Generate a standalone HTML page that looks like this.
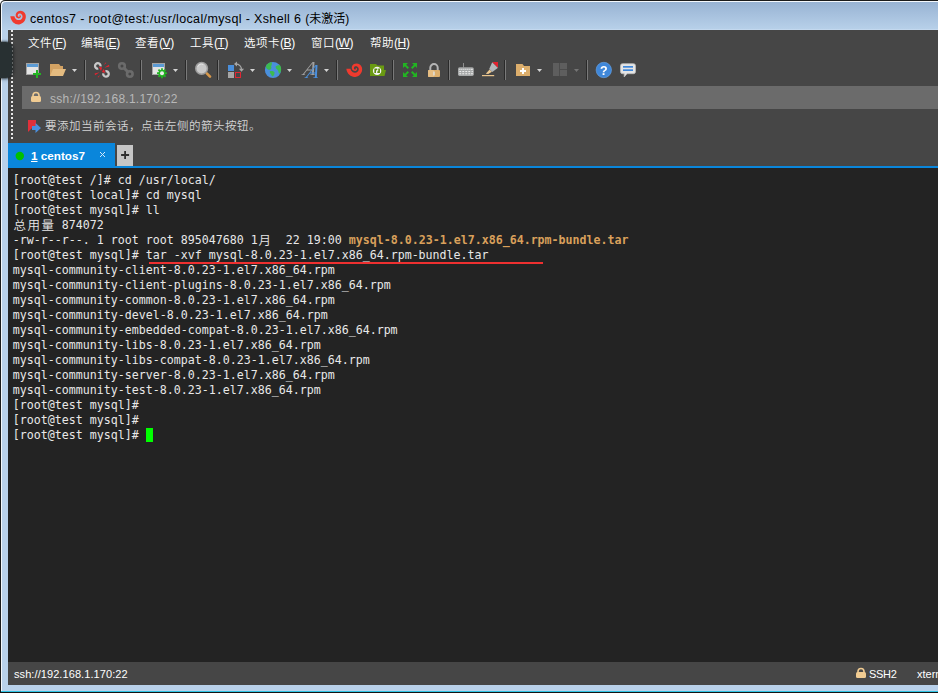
<!DOCTYPE html>
<html lang="zh-CN">
<head>
<meta charset="utf-8">
<title>centos7 - root@test:/usr/local/mysql - Xshell 6</title>
<style>
html,body{margin:0;padding:0;}
body{width:938px;height:693px;overflow:hidden;position:relative;background:#fff;
  font-family:"Liberation Sans","Noto Sans CJK SC",sans-serif;}
.abs{position:absolute;}
#frame{left:0;top:0;width:960px;height:693px;box-sizing:border-box;border:1px solid #1b1b1b;border-bottom-color:#141414;border-radius:5px 0 0 0;box-shadow:inset 1px 1px 0 #f4f8fc;background:linear-gradient(#97b2d2 0px,#98b3d3 1px,#b7d0e9 28px,#b9d1ea 29px);}
#hl{left:8px;top:29px;width:930px;height:1px;background:#c3d8ee;}
#topline,#topwhite,#leftline,#leftwhite{display:none;}
#botline{left:0;top:692px;width:938px;height:1px;background:#141414;}
#botcyan{left:1px;top:691px;width:937px;height:1px;background:#2fc4e4;}
#title{left:30px;top:10px;font-size:12.5px;line-height:18px;color:#000;white-space:nowrap;letter-spacing:0.36px;}
#title span{font-size:12px;letter-spacing:0;}
#app{left:8px;top:30px;width:930px;height:655px;background:#464646;}
#menubar{left:0;top:0;width:930px;height:26px;}
.menu{position:absolute;top:5px;font-size:12px;line-height:16px;color:#fff;white-space:nowrap;letter-spacing:-0.400px;}
.menu i{font-style:normal;font-size:11.500px;letter-spacing:0.500px;font-weight:350;}
#grip,#grip2{left:3px;width:2px;background:repeating-linear-gradient(#e8e8e8 0,#e8e8e8 2px,transparent 2px,transparent 4px);}
#grip{top:0;height:42px;}
#grip2{top:43px;height:66px;}
#addr{left:14px;top:56px;width:916px;height:23px;background:#6b6b6b;}
#addr span{position:absolute;left:28px;top:5px;font-size:12px;line-height:16px;color:#b8b8b8;letter-spacing:0.25px;}
#hint{left:37px;top:88px;font-size:11.500px;letter-spacing:0.500px;line-height:16px;color:#d4d4d4;white-space:nowrap;font-weight:350;}
#tab{left:0;top:113px;width:107px;height:25px;background:#0a86db;}
#tabline{left:0;top:136px;width:930px;height:2px;background:#0a86db;}
#tabtxt{left:23px;top:118px;font-size:11.7px;line-height:16px;font-weight:bold;color:#fff;white-space:nowrap;}
#plus{left:109px;top:115px;width:16px;height:21px;background:#c6c6c6;}
#term{left:0;top:138px;width:930px;height:494px;background:#232323;}
#term pre{margin:0;position:absolute;left:4.700px;top:5px;font-family:"DejaVu Sans Mono","Noto Sans CJK SC",monospace;font-size:11.63px;line-height:15px;color:#e8e8e8;}
#cursor{left:138px;top:260px;width:7px;height:14px;background:#00ff00;}
#redline{left:141px;top:94px;width:394px;height:2px;background:#ee3030;}
#status{left:0;top:632px;width:930px;height:23px;background:#464646;}
#status span{position:absolute;top:4px;font-size:11px;line-height:16px;color:#fff;white-space:nowrap;letter-spacing:0.08px;}
.b{color:#d9a05b;font-weight:bold;}
#term s{text-decoration:none;position:relative;top:-1px;}
.c{display:inline-block;width:14px;text-align:center;font-size:12.5px;line-height:15px;vertical-align:top;font-weight:350;}
#blob{left:-6px;top:42px;width:17.500px;height:36px;border-radius:6.500px;background:#283032;box-shadow:0.500px 0 2px 0.800px rgba(30,36,38,.7),1px 1px 4px rgba(0,0,0,.35);}
#ico{left:0;top:0;will-change:transform;}
</style>
</head>
<body>
<div id="frame" class="abs"></div>
<div id="hl" class="abs"></div><div id="topline" class="abs"></div><div id="topwhite" class="abs"></div>
<div id="leftline" class="abs"></div><div id="leftwhite" class="abs"></div>
<div id="botcyan" class="abs"></div><div id="botline" class="abs"></div>
<div id="title" class="abs">centos7 - root@test:/usr/local/mysql - Xshell 6 <span>(未激活)</span></div>
<div id="app" class="abs">
  <div id="menubar" class="abs">
    <span class="menu" style="left:20px"><i>文件</i>(<u>F</u>)</span>
    <span class="menu" style="left:73px"><i>编辑</i>(<u>E</u>)</span>
    <span class="menu" style="left:127px"><i>查看</i>(<u>V</u>)</span>
    <span class="menu" style="left:182px"><i>工具</i>(<u>T</u>)</span>
    <span class="menu" style="left:236px"><i>选项卡</i>(<u>B</u>)</span>
    <span class="menu" style="left:303px"><i>窗口</i>(<u>W</u>)</span>
    <span class="menu" style="left:362px"><i>帮助</i>(<u>H</u>)</span>
  </div>
  <div id="grip" class="abs"></div><div id="grip2" class="abs"></div>
  <div id="addr" class="abs"><span>ssh://192.168.1.170:22</span></div>
  <div id="hint" class="abs">要添加当前会话，点击左侧的箭头按钮。</div>
  <div id="tab" class="abs"></div>
  <div id="tabline" class="abs"></div>
  <div id="tabtxt" class="abs"><u>1</u> centos7</div>
  <div id="plus" class="abs"></div>
  <div id="term" class="abs"><pre><s>[</s>root@test /<s>]</s># cd /usr/local/
<s>[</s>root@test local<s>]</s># cd mysql
<s>[</s>root@test mysql<s>]</s># ll
<span class="c">总</span><span class="c">用</span><span class="c">量</span> 874072
-rw-r--r--. 1 root root 895047680 1<span class="c">月</span>  22 19:00 <span class="b">mysql-8.0.23-1.el7.x86_64.rpm-bundle.tar</span>
<s>[</s>root@test mysql<s>]</s># tar -xvf mysql-8.0.23-1.el7.x86_64.rpm-bundle.tar
mysql-community-client-8.0.23-1.el7.x86_64.rpm
mysql-community-client-plugins-8.0.23-1.el7.x86_64.rpm
mysql-community-common-8.0.23-1.el7.x86_64.rpm
mysql-community-devel-8.0.23-1.el7.x86_64.rpm
mysql-community-embedded-compat-8.0.23-1.el7.x86_64.rpm
mysql-community-libs-8.0.23-1.el7.x86_64.rpm
mysql-community-libs-compat-8.0.23-1.el7.x86_64.rpm
mysql-community-server-8.0.23-1.el7.x86_64.rpm
mysql-community-test-8.0.23-1.el7.x86_64.rpm
<s>[</s>root@test mysql<s>]</s>#
<s>[</s>root@test mysql<s>]</s>#
<s>[</s>root@test mysql<s>]</s># </pre>
    <div id="redline" class="abs"></div>
    <div id="cursor" class="abs"></div>
  </div>
  <div id="status" class="abs"><span style="left:6px">ssh://192.168.1.170:22</span><span style="left:861px;letter-spacing:-0.3px">SSH2</span><span style="left:909px;letter-spacing:0">xterm</span></div>
</div>
<div id="blob" class="abs"></div>
<svg id="ico" class="abs" width="938" height="693" viewBox="0 0 938 693">
<defs>
  <path id="dd" d="M0 0h5l-2.5 3z"/>
  <g id="sep"><rect x="0" y="60" width="1" height="20" fill="#2a2a2a"/><rect x="1" y="60" width="1" height="20" fill="#7a7a7a"/></g>
</defs>
<!-- title-bar Xshell logo -->
<g transform="translate(10,10)">
  <path d="M0.3 6.2 C1.2 12.5 6 15.2 10 14.2 C14.5 13 16.6 8.6 15.6 4.8 C14.6 1.2 10.6 -0.2 7.8 1.4 C5.2 2.9 5 6.6 7.2 8 C8.8 9 10.8 8.2 10.9 6.6 C10.95 5.6 10 5 9.3 5.4 C9.9 5.7 9.9 6.6 9.2 6.8 C8.2 7 7.5 6 7.8 5 C8.2 3.7 9.9 3.2 11.2 4 C12.8 5 13 7.4 11.6 8.9 C9.8 10.8 6.6 10.4 5.2 8.2 C4.6 7.3 4.5 6.6 4.5 6.2 Z" fill="#f03a2e"/>
</g>
<!-- separators -->
<use href="#sep" x="84"/><use href="#sep" x="140"/><use href="#sep" x="185"/><use href="#sep" x="217"/>
<use href="#sep" x="336"/><use href="#sep" x="392"/><use href="#sep" x="448"/><use href="#sep" x="504"/><use href="#sep" x="586"/>
<!-- dropdown arrows -->
<g fill="#d4d4d4">
<use href="#dd" x="72" y="69"/><use href="#dd" x="173" y="69"/><use href="#dd" x="250" y="69"/><use href="#dd" x="287" y="69"/>
<use href="#dd" x="324" y="69"/><use href="#dd" x="537" y="69"/>
</g>
<use href="#dd" x="574" y="69" fill="#747474"/>
<!-- 1 new session -->
<rect x="26.5" y="63.5" width="12" height="11" fill="#e4e4e4" stroke="#a4a4a4"/>
<rect x="27" y="64" width="11" height="3" fill="#5b9bd5"/>
<path d="M36 70h2v3h3v2h-3v3h-2v-3h-3v-2h3z" fill="#22b422"/>
<!-- 2 open folder -->
<path d="M50 64h9l1.5 2H63v10H50z" fill="#d3a263"/>
<path d="M53 69h13l-3 7H50z" fill="#e4bb80"/>
<!-- 3 disconnect -->
<g fill="none" stroke="#c8c8c8" stroke-width="2.300">
<path d="M98.28 68.61A2.75 2.75 0 1 1 100.51 66.38"/>
<path d="M105.52 71.19A2.75 2.75 0 1 1 103.29 73.42"/>
</g>
<g fill="#e3222f">
<path d="M98.700 66.800l3.500 0.700-1.200 3.500z"/><path d="M105.300 73l-3.500-1 2-3.200z"/>
<path d="M103.800 65l1.800-2.600 0.800 0.700z"/><path d="M104.300 67.700l4.600-2.900 0.500 1.700z"/>
<path d="M100.200 75l-1.800 2.600-0.800-0.700z"/><path d="M99.700 72.300l-4.600 2.900-0.500-1.700z"/>
</g>
<!-- 4 link (disabled) -->
<g fill="none" stroke="#6b6b6b" stroke-width="2.600">
<circle cx="122" cy="66" r="2.800"/><circle cx="129.800" cy="74" r="2.800"/>
<path d="M123.800 67.800l4.400 4.400" stroke-width="3"/>
</g>
<!-- 5 session properties -->
<rect x="152.500" y="63.500" width="12" height="11" fill="#e4e4e4" stroke="#a4a4a4"/>
<rect x="153" y="64" width="11" height="3" fill="#5b9bd5"/>
<g transform="translate(162,73.2)">
<g stroke="#22b422" stroke-width="1.800" stroke-linecap="butt">
<path d="M0-5V5M-5 0H5M-3.550-3.550L3.550 3.550M-3.550 3.550L3.550-3.550"/>
</g>
<circle r="3.500" fill="#22b422"/><circle r="2" fill="#ececec"/>
</g>
<!-- 6 magnifier -->
<path d="M206.800 73.400l3.200 3.200" stroke="#d7984a" stroke-width="2.700" stroke-linecap="round"/>
<circle cx="201.600" cy="68.400" r="5.850" fill="#c9c9c9" stroke="#9c9c9c" stroke-width="1.500"/>
<path d="M197.800 66.700A4.300 4.300 0 0 1 203.300 64.500" fill="none" stroke="#e6e6e6" stroke-width="1"/>
<!-- 7 layout arrows -->
<rect x="228" y="65" width="6" height="6" fill="#4a8fdc"/>
<rect x="228" y="72" width="6" height="6" fill="#a6a6a6"/>
<rect x="235.500" y="72.500" width="5" height="5" fill="none" stroke="#e02634"/>
<path d="M236 64A5.500 5.500 0 0 1 241.500 69.500" fill="none" stroke="#a6a6a6" stroke-width="1.300"/>
<path d="M234 64l3-2.600v5.200z" fill="#a6a6a6"/><path d="M241.500 71.800l-2.600-3h5.200z" fill="#a6a6a6"/>
<!-- 8 globe -->
<circle cx="273" cy="70" r="8.100" fill="#4a8fdc"/>
<path d="M267 64.600c1.400-1.500 3.200-2.300 4.800-2.300c.4 1.600-.2 3-.7 4.200c.7 1.200.4 2.500-.9 3.200c-1.600.3-3.200-.5-4-1.800c-.4-1.100 0-2.300.8-3.300z" fill="#3dbb4f"/>
<path d="M275.500 66.800c1.200-1.100 2.800-1.900 4.400-1.700c1 1.500 1.500 3.400 1.200 5.300c-.4 1.500-1.100 2.700-2 3.500c-.6-1.500-.9-3-1.700-4.300c-1-.6-1.700-1.600-1.900-2.800z" fill="#3dbb4f"/>
<path d="M269.800 71.300c1.700-.7 3.700-.3 4.700 1c.2 1.700-.6 3.300-1.900 4.300c-.7-.4-1.200-1.200-1.400-2.100c-.9-.8-1.500-2-1.400-3.200z" fill="#3dbb4f"/>
<!-- 9 font -->
<g font-family="Liberation Serif, serif" font-style="italic" font-size="19.800">
<text transform="translate(302.600,75) skewX(-14) scale(1.020,1)" fill="#a0a0a0">A</text>
<text transform="translate(305.600,78) skewX(-14) scale(1.020,1)" fill="#4a8fdc">A</text>
</g>
<!-- 10 xshell logo -->
<g transform="translate(346,62.700) scale(1.020,0.990)">
  <path d="M0.3 6.2 C1.2 12.5 6 15.2 10 14.2 C14.5 13 16.6 8.6 15.6 4.8 C14.6 1.2 10.6 -0.2 7.8 1.4 C5.2 2.9 5 6.600 7.200 8 C8.800 9 10.800 8.200 10.900 6.600 C10.950 5.600 10 5 9.300 5.400 C9.900 5.700 9.900 6.600 9.200 6.800 C8.200 7 7.500 6 7.800 5 C8.200 3.700 9.900 3.200 11.200 4 C12.800 5 13 7.400 11.600 8.900 C9.800 10.800 6.600 10.400 5.200 8.200 C4.600 7.300 4.500 6.600 4.500 6.200 Z" fill="#f03a2e"/>
</g>
<!-- 11 xftp -->
<path d="M370 64h6l1.500 1.500H384v4.500h2l-1.500 6H370z" fill="#6a9a12"/>
<circle cx="377.100" cy="70.900" r="4.200" fill="#f6f6f6"/>
<path d="M375.200 73v-3.700h2.100M379.100 68.400v3.800h-1.800" fill="none" stroke="#5e8c0c" stroke-width="1.700"/>
<!-- 12 fullscreen -->
<g fill="#22b422">
<path d="M403 63h5l-1.800 1.800 2.800 2.800-1.400 1.400-2.800-2.800L403 68z"/>
<path d="M417 63v5l-1.800-1.800-2.800 2.800-1.400-1.400 2.800-2.800L412 63z"/>
<path d="M403 77v-5l1.800 1.800 2.800-2.800 1.400 1.400-2.800 2.800L408 77z"/>
<path d="M417 77h-5l1.800-1.800-2.800-2.800 1.400-1.400 2.800 2.800L417 72z"/>
</g>
<!-- 13 lock -->
<path d="M430.300 70.500v-2.700a3.700 3.700 0 0 1 7.400 0v2.700" fill="none" stroke="#b4b4b4" stroke-width="2"/>
<rect x="428" y="70" width="12" height="7" rx="1" fill="#dcae6c"/>
<rect x="428" y="70" width="6" height="7" rx="1" fill="#e6bd82"/>
<rect x="433.400" y="71.500" width="1.200" height="4" fill="#dfe9f5"/>
<!-- 14 keyboard -->
<rect x="463" y="63" width="1" height="4.500" fill="#8e8e8e"/>
<rect x="458" y="67.200" width="15.800" height="8.700" rx="1.600" fill="#a6a8a8"/>
<g fill="#ececec"><rect x="459.3" y="68.800" width="1.100" height="1.100"/><rect x="461.3" y="68.800" width="1.100" height="1.100"/><rect x="463.3" y="68.800" width="1.100" height="1.100"/><rect x="465.3" y="68.800" width="1.100" height="1.100"/><rect x="467.3" y="68.800" width="1.100" height="1.100"/><rect x="469.3" y="68.800" width="1.100" height="1.100"/><rect x="471" y="68.800" width="1.800" height="1.100"/><rect x="459.3" y="71" width="1.900" height="1.100"/><rect x="462.3" y="71" width="1.900" height="1.100"/><rect x="465.3" y="71" width="1.900" height="1.100"/><rect x="468.3" y="71" width="1.900" height="1.100"/><rect x="471.600" y="71" width="1.200" height="1.100"/><rect x="459.3" y="73.200" width="1.900" height="1.100"/><rect x="462.3" y="73.200" width="1.900" height="1.100"/><rect x="465.3" y="73.200" width="1.900" height="1.100"/><rect x="468.3" y="73.200" width="1.900" height="1.100"/><rect x="471.0" y="73.200" width="1.900" height="1.100"/></g>
<!-- 15 highlighter -->
<rect x="482" y="75" width="12.200" height="1.200" fill="#e8c48c"/>
<path d="M489.600 69.400l2.400 2.300-3.800 2.400-2.400-.3z" fill="#ecc890"/>
<path d="M489.200 69l3-6.800 5.800 5.600-5.600 4.300z" fill="#b2b8bb"/>
<path d="M492.300 62h5.700v5.800z" fill="#e3222f"/>
<!-- 16 new folder -->
<path d="M516 64h6.500l1.500 2H530v10H516z" fill="#dcae6c"/>
<path d="M522 68h2v2h2v2h-2v2h-2v-2h-2v-2h2z" fill="#fff"/>
<!-- 17 layout disabled -->
<rect x="553" y="63" width="14" height="13" fill="#5e5e5e"/>
<rect x="559" y="63" width="1" height="13" fill="#4c4c4c"/><rect x="560" y="69" width="7" height="1" fill="#4c4c4c"/>
<!-- 18 help -->
<circle cx="603.800" cy="70" r="7.700" fill="#3f87d9" stroke="#6aa5e6" stroke-width="0.600"/>
<text x="603.800" y="74.500" text-anchor="middle" font-family="Liberation Sans, sans-serif" font-weight="bold" font-size="12.500" fill="#fff">?</text>
<!-- 19 chat -->
<path d="M622.500 63.700h11a2 2 0 0 1 2 2v6a2 2 0 0 1 -2 2h-6.500l-2.800 3.300v-3.300h-1.700a2 2 0 0 1 -2-2v-6a2 2 0 0 1 2-2z" fill="#e4e4e4" stroke="#bdbdbd" stroke-width="0.800"/>
<rect x="623" y="66" width="10" height="1.700" fill="#3f87d9"/><rect x="623" y="69.300" width="10" height="1.700" fill="#3f87d9"/>
<!-- address lock -->
<path d="M33 97v-1.500a3 3 0 0 1 6 0V97" fill="none" stroke="#f0cb92" stroke-width="1.600"/>
<rect x="31" y="96" width="10" height="6" rx="1.500" fill="#f0cb92"/>
<!-- hint icon -->
<path d="M28 120h8v8l-4 0l-4 4z" fill="#e0303a"/>
<path d="M32 126h3.500v-3l5.500 5-5.500 5v-3H32z" fill="#4a8fdc"/>
<!-- tab decorations -->
<circle cx="19.800" cy="156" r="4.200" fill="#00c000"/>
<path d="M100 152l5 5M105 152l-5 5" stroke="#d4e9fa" stroke-width="1" fill="none"/>
<path d="M124.200 151h1.800v3.100h3.100v1.800h-3.100v3.100h-1.800v-3.100h-3.100v-1.800h3.100z" fill="#303030"/>
<!-- status lock -->
<path d="M858 673v-1.500a3 3 0 0 1 6 0V673" fill="none" stroke="#f0cb92" stroke-width="1.600"/>
<rect x="856" y="672" width="10" height="6" rx="1.500" fill="#f0cb92"/>

</svg>
</body>
</html>
